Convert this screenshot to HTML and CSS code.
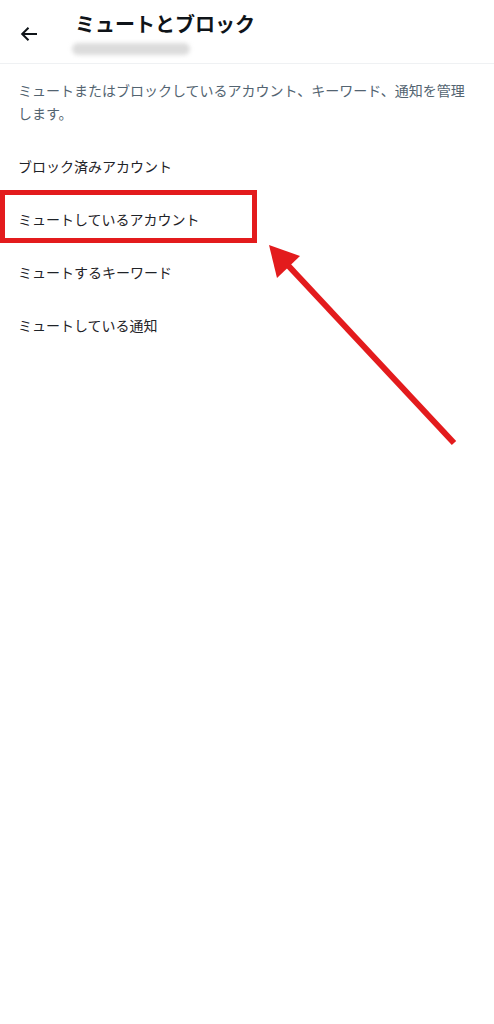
FILE: index.html
```html
<!DOCTYPE html>
<html lang="ja">
<head>
    <meta charset="UTF-8">
    <meta name="viewport" content="width=device-width, initial-scale=1.0">
    <title>ミュートとブロック</title>
    <link rel="stylesheet" href="styles.css">
</head>
<body>
    <header class="top-bar">
        <a href="#" class="back-btn" aria-label="戻る">
            <svg width="18" height="16" viewBox="0 0 18 16"><path d="M17 8H2.5M8.5 1.8L2.2 8l6.3 6.2" fill="none" stroke="#0f1419" stroke-width="2"/></svg>
        </a>
        <div class="top-titles">
            <h1>ミュートとブロック</h1>
            <div class="handle-blur"></div>
        </div>
    </header>
    <main class="page">
        <p class="intro">ミュートまたはブロックしているアカウント、キーワード、通知を管理します。</p>
        <ul class="menu">
            <li>ブロック済みアカウント</li>
            <li>ミュートしているアカウント</li>
            <li>ミュートするキーワード</li>
            <li>ミュートしている通知</li>
        </ul>
        <div class="mark-box"></div>
        <svg class="mark-arrow" width="494" height="460" viewBox="0 0 494 460">
            <line x1="454" y1="443" x2="283" y2="260" stroke="#e31b1d" stroke-width="6"/>
            <polygon points="269,245 300,256 277,278" fill="#e31b1d"/>
        </svg>
    </main>
</body>
</html>
```

FILE: styles.css
```css
body { margin: 0; font-family: "Noto Sans CJK JP", "Noto Sans", sans-serif; background: #fff; color: #0f1419; }
.top-bar { display: flex; align-items: flex-start; height: 63px; border-bottom: 1px solid #eff1f3; box-sizing: content-box; }
.back-btn { display: flex; margin: 26px 0 0 20px; width: 18px; height: 16px; }
.top-titles { margin-left: 37px; padding-top: 10px; }
.top-titles h1 { margin: 0; font-size: 20px; line-height: 28px; font-weight: 700; }
.handle-blur { width: 118px; height: 12px; margin-top: 5px; margin-left: -3px; border-radius: 7px; background: #dcdcdc; filter: blur(2px); }
.page { position: relative; min-height: 960px; }
.intro { margin: 0; padding: 15px 18px 15px; font-size: 14px; line-height: 23px; color: #536471; }
.menu { list-style: none; margin: 0; padding: 0; }
.menu li { height: 53px; line-height: 53px; padding-left: 18px; font-size: 14px; color: #1f2328; }
.mark-box { position: absolute; left: 0; top: 126px; width: 247px; height: 43px; border: 5.5px solid #e31b1d; }
.mark-arrow { position: absolute; left: 0; top: -64px; overflow: visible; }
```
